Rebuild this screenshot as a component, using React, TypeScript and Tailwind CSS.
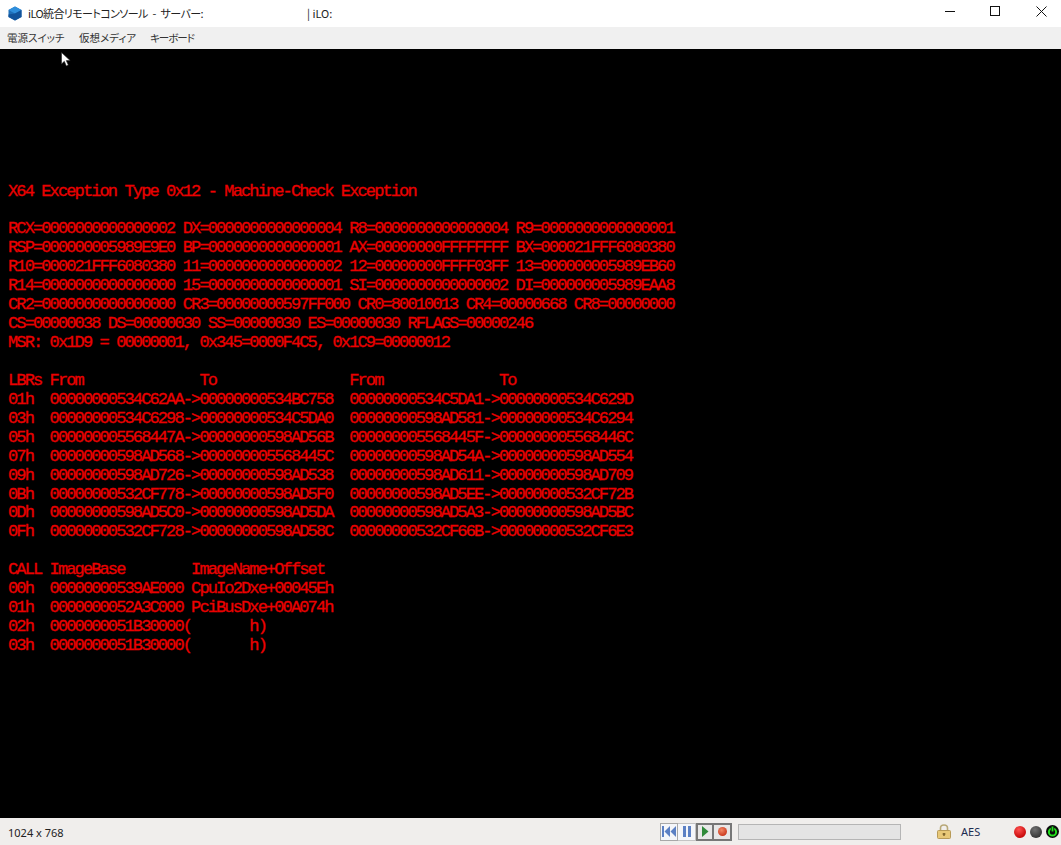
const consoleLines = [
  "X64 Exception Type 0x12 - Machine-Check Exception",
  "",
  "RCX=0000000000000002 DX=0000000000000004 R8=0000000000000004 R9=0000000000000001",
  "RSP=000000005989E9E0 BP=0000000000000001 AX=00000000FFFFFFFF BX=000021FFF6080380",
  "R10=000021FFF6080380 11=0000000000000002 12=00000000FFFF03FF 13=000000005989EB60",
  "R14=0000000000000000 15=0000000000000001 SI=0000000000000002 DI=000000005989EAA8",
  "CR2=0000000000000000 CR3=00000000597FF000 CR0=80010013 CR4=00000668 CR8=00000000",
  "CS=00000038 DS=00000030 SS=00000030 ES=00000030 RFLAGS=00000246",
  "MSR: 0x1D9 = 00000001, 0x345=0000F4C5, 0x1C9=00000012",
  "",
  "LBRs From              To                From              To",
  "01h  00000000534C62AA->00000000534BC758  00000000534C5DA1->00000000534C629D",
  "03h  00000000534C6298->00000000534C5DA0  00000000598AD581->00000000534C6294",
  "05h  000000005568447A->00000000598AD56B  000000005568445F->000000005568446C",
  "07h  00000000598AD568->000000005568445C  00000000598AD54A->00000000598AD554",
  "09h  00000000598AD726->00000000598AD538  00000000598AD611->00000000598AD709",
  "0Bh  00000000532CF778->00000000598AD5F0  00000000598AD5EE->00000000532CF72B",
  "0Dh  00000000598AD5C0->00000000598AD5DA  00000000598AD5A3->00000000598AD5BC",
  "0Fh  00000000532CF728->00000000598AD58C  00000000532CF66B->00000000532CF6E3",
  "",
  "CALL ImageBase        ImageName+Offset",
  "00h  00000000539AE000 CpuIo2Dxe+00045Eh",
  "01h  0000000052A3C000 PciBusDxe+00A074h",
  "02h  0000000051B30000(       h)",
  "03h  0000000051B30000(       h)",
];

const Logo = () => (
  <svg width="14" height="15" viewBox="0 0 14 15">
    <path d="M7 0.5 13.5 4v7L7 14.5.5 11V4z" fill="#1f6fb8" />
    <path d="M.5 4 7 0.5 13.5 4 7 7.5z" fill="#2f8fdc" />
    <path d="M.5 8.5 7 7.5 13.5 4v7L7 14.5.5 11z" fill="#12539a" />
  </svg>
);

const WindowButtons = () => (
  <div className="flex items-center gap-[35px] pr-[14px] pb-[5px]">
    <button className="flex">
      <svg width="10" height="10" viewBox="0 0 10 10">
        <path d="M0 5.5h10" stroke="#111" strokeWidth="1" />
      </svg>
    </button>
    <button className="flex">
      <svg width="10" height="10" viewBox="0 0 10 10">
        <rect x="0.5" y="0.5" width="9" height="9" fill="none" stroke="#111" strokeWidth="1" />
      </svg>
    </button>
    <button className="flex ml-px">
      <svg width="11" height="11" viewBox="0 0 11 11">
        <path d="M.5.500l10 10M10.500.500l-10 10" stroke="#111" strokeWidth="1" />
      </svg>
    </button>
  </div>
);

const RewindIcon = () => (
  <svg width="15" height="11" viewBox="0 0 15 11">
    <path d="M0 0h2v11H0z" fill="#5b80c4" />
    <path d="M8 0v11L2.500 5.500z" fill="#5b80c4" />
    <path d="M14 0v11L8.500 5.500z" fill="#5b80c4" />
  </svg>
);

const PauseIcon = () => (
  <svg width="8" height="11" viewBox="0 0 8 11">
    <path d="M0 0h3v11H0zM5 0h3v11H5z" fill="#5b80c4" />
  </svg>
);

const PlayIcon = () => (
  <svg width="7" height="11" viewBox="0 0 7 11">
    <path d="M0 0l6.500 5.500L0 11z" fill="#2f8a3a" />
  </svg>
);

const RecordIcon = () => (
  <svg width="9" height="9" viewBox="0 0 9 9">
    <defs>
      <radialGradient id="rec" cx="40%" cy="35%" r="70%">
        <stop offset="0%" stopColor="#f28a68" />
        <stop offset="100%" stopColor="#c8341a" />
      </radialGradient>
    </defs>
    <circle cx="4.500" cy="4.500" r="4.500" fill="url(#rec)" />
  </svg>
);

const LockIcon = () => (
  <svg width="14" height="15" viewBox="0 0 14 15">
    <path d="M3.500 7V4a3.500 3 0 0 1 7 0v3" fill="none" stroke="#b8a878" strokeWidth="1.600" />
    <rect x="0.500" y="6.500" width="13" height="8" rx="1" fill="#e8c878" stroke="#b89a58" />
    <path d="M7 9v3M5.500 10h3" stroke="#6b5320" strokeWidth="1.200" />
  </svg>
);

const Led = ({ from, to }: { from: string; to: string }) => (
  <svg width="12" height="12" viewBox="0 0 12 12">
    <defs>
      <radialGradient id={from.slice(1)} cx="40%" cy="30%" r="75%">
        <stop offset="0%" stopColor={from} />
        <stop offset="100%" stopColor={to} />
      </radialGradient>
    </defs>
    <circle cx="6" cy="6" r="6" fill={`url(#${from.slice(1)})`} />
  </svg>
);

const PowerLed = () => (
  <svg width="13" height="13" viewBox="0 0 13 13">
    <circle cx="6.500" cy="6.500" r="6.500" fill="#0b0b0b" />
    <circle cx="6.500" cy="7" r="3.600" fill="none" stroke="#22e01c" strokeWidth="2" />
    <path d="M6.500 1.500v5" stroke="#0b0b0b" strokeWidth="3.400" />
    <path d="M6.500 1.500v5" stroke="#22e01c" strokeWidth="1.800" />
  </svg>
);

export default function App() {
  return (
    <div className="w-[1061px] h-[845px] flex flex-col overflow-hidden bg-black font-['Noto_Sans_CJK_JP','Noto_Sans',sans-serif]">
      <div className="h-[27px] shrink-0 bg-white flex items-center justify-between">
        <div className="flex items-center pl-2 text-[11px] text-[#222] [font-feature-settings:'palt']">
          <Logo />
          <span className="ml-[6px] w-[279px] whitespace-nowrap tracking-[-0.600px] [word-spacing:3px]">iLO統合リモートコンソール - サーバー:</span>
          <span className="whitespace-nowrap">| iLO:</span>
        </div>
        <WindowButtons />
      </div>

      <div className="h-[22px] shrink-0 bg-[#f0f0f0] flex items-center pl-[7px] gap-[15px] text-[10.5px] text-[#333] pb-[1px] [font-feature-settings:'palt']">
        <span className="w-[57px] whitespace-nowrap">電源スイッチ</span>
        <span className="w-[56px] whitespace-nowrap">仮想メディア</span>
        <span className="whitespace-nowrap tracking-[-1px]">キーボード</span>
      </div>

      <div className="relative flex-1 bg-black pt-[133.500px] pl-2">
        <svg className="absolute left-[61px] top-[3px]" width="11" height="15" viewBox="0 0 11 15">
          <path d="M.5.500v11.500l2.800-2.700 2 4.700 2-.9-2-4.500h3.900z" fill="#fff" stroke="#222" strokeWidth="0.600" />
        </svg>
        {consoleLines.map((line, i) => (
          <pre
            key={i}
            className="h-[18.950px] leading-[18.950px] text-[17px] tracking-[-1.880px] text-[#f00000] [-webkit-text-stroke:0.350px_#e00000] font-['Liberation_Mono',monospace]"
          >
            {line}
          </pre>
        ))}
      </div>

      <div className="h-[27px] shrink-0 bg-[#f0eeec] flex items-center pl-2 text-[11px] text-[#222]">
        <span className="w-[652px] pt-[3px] font-['Noto_Sans',sans-serif]">1024 x 768</span>
        <div className="flex h-[18px]">
          <div className="w-[18px] border border-[#a8a8a8] bg-[#f4f6fa] flex items-center justify-center">
            <RewindIcon />
          </div>
          <div className="w-[18px] border border-[#c4c4c4] border-l-0 bg-[#f4f6fa] flex items-center justify-center">
            <PauseIcon />
          </div>
          <div className="w-[18px] border-2 border-[#777] bg-[#e8e8e8] flex items-center justify-center">
            <PlayIcon />
          </div>
          <div className="w-[18px] border-2 border-l-0 border-[#777] bg-[#e8e8e8] flex items-center justify-center">
            <RecordIcon />
          </div>
        </div>
        <div className="ml-[6px] w-[163px] h-[16px] border border-[#b5b5b5] bg-[#e4e4e4]" />
        <div className="ml-9 flex items-center">
          <LockIcon />
        </div>
        <span className="ml-[10px] w-[53px] pt-px text-[#1c2c50] font-['Noto_Sans',sans-serif]">AES</span>
        <div className="flex items-center gap-1">
          <Led from="#ff5050" to="#c00000" />
          <Led from="#707070" to="#303030" />
          <PowerLed />
        </div>
      </div>
    </div>
  );
}
